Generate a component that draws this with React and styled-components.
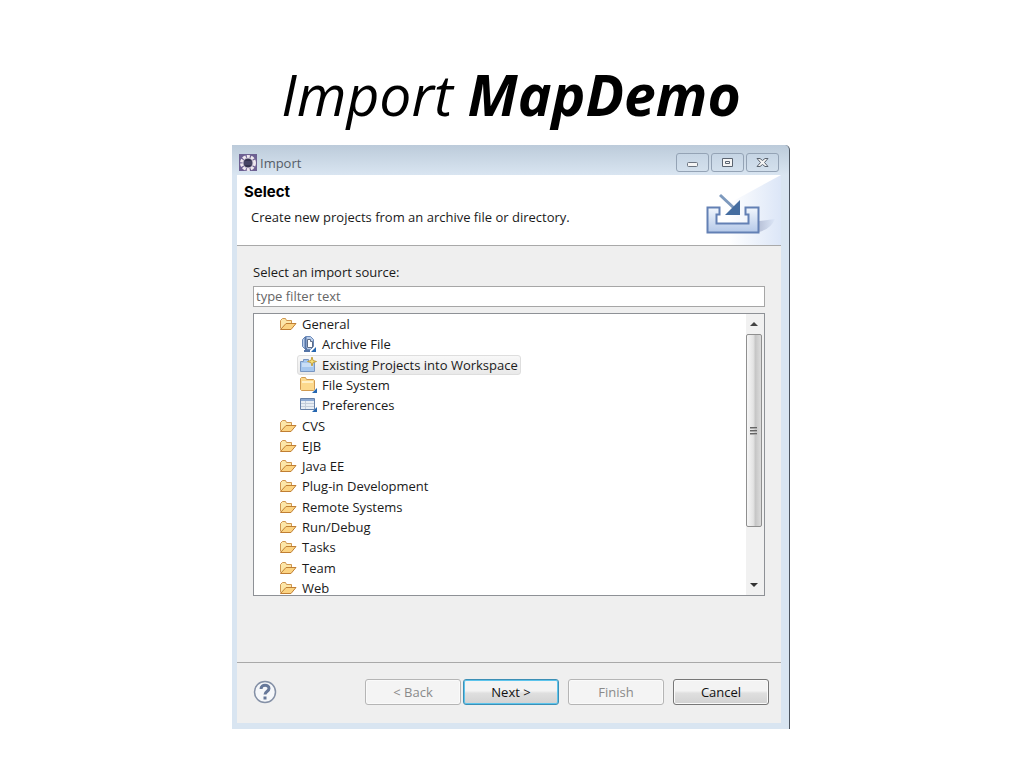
import React, { useState } from 'react';
import styled, { createGlobalStyle } from 'styled-components';

const GlobalStyle = createGlobalStyle`
  * {
    box-sizing: border-box;
  }
  body {
    margin: 0;
    background: #fff;
    color: #1a1a1a;
    font: 13px/20px "Open Sans", "Noto Sans", sans-serif;
  }
  button, input {
    font: inherit;
  }
`;

const Slide = styled.main`
  padding: 58px 234px 39px 232px;
`;

const SlideTitle = styled.h1`
  margin: 0 0 15px;
  font: italic 400 57px/72px "Open Sans", "Noto Sans", sans-serif;
  color: #000;
  text-align: center;
  white-space: nowrap;
`;

const Dialog = styled.section`
  padding: 0 8px 6px 5px;
  background: #d9e5f1;
  border-right: 1px solid #4c5560;
  border-top-right-radius: 5px;
  background-image: linear-gradient(#bccbda, #d9e5f1 30px);
`;

const TitleBar = styled.header`
  display: flex;
  align-items: center;
  height: 30px;
  padding: 5px 2px 0;
  gap: 3px;
  color: #555d68;
`;

const TitleText = styled.span`
  flex: 1;
`;

const WindowButtons = styled.div`
  display: flex;
  gap: 2px;
`;

const WindowButton = styled.button`
  display: grid;
  place-items: center;
  width: 33px;
  height: 19px;
  padding: 0;
  border: 1px solid #94a3b5;
  border-radius: 3px;
  background: linear-gradient(#c6d5e4, #d3e0ed);
`;

const Banner = styled.div`
  display: flex;
  justify-content: space-between;
  height: 71px;
  padding-left: 7px;
  border-bottom: 1px solid #a9a9a9;
  background: #fff;
`;

const BannerTitle = styled.h2`
  margin: 7px 0 5px;
  font: 700 15px/20px Inter, sans-serif;
  color: #000;
`;

const BannerText = styled.p`
  margin: 0;
  padding-left: 7px;
`;

const Body = styled.div`
  padding: 16px 16px 66px;
  background: #efefef;
  border-bottom: 1px solid #a9a9a9;
`;

const FilterLabel = styled.label`
  display: block;
  margin-bottom: 4px;
`;

const FilterInput = styled.input`
  display: block;
  width: 100%;
  height: 21px;
  margin-bottom: 6px;
  padding: 0 2px 1px;
  border: 1px solid #a6a6a6;
  background: #fff;
  &::placeholder {
    color: #666;
    opacity: 1;
  }
`;

const TreeFrame = styled.div`
  display: flex;
  height: 283px;
  border: 1px solid #8e9196;
  background: #fff;
  overflow: hidden;
`;

const Tree = styled.ul`
  flex: 1;
  display: grid;
  grid-auto-rows: 1fr;
  justify-items: start;
  height: 284px;
  margin: 0;
  padding: 0;
  line-height: 18px;
  list-style: none;
`;

const TreeItem = styled.li`
  display: flex;
  align-items: center;
  gap: 5px;
  margin-left: ${(props) => (props.$level === 2 ? '43px' : '23px')};
  padding: 0 2px;
  border: 1px solid ${(props) => (props.$selected ? '#dedede' : 'transparent')};
  border-radius: 3px;
  background: ${(props) =>
    props.$selected ? 'linear-gradient(#f8f8f8, #e9e9e9)' : 'none'};
`;

const ScrollBar = styled.div`
  display: flex;
  flex-direction: column;
  width: 18px;
  padding-right: 2px;
  background: #f1f1f1;
`;

const ScrollButton = styled.button`
  display: grid;
  place-items: center;
  height: 20px;
  padding: 0;
  border: 0;
  background: none;
`;

const ScrollTrack = styled.div`
  flex: 1;
`;

const ScrollThumb = styled.div`
  display: grid;
  place-items: center;
  height: 80%;
  border: 1px solid #8f8f8f;
  border-radius: 2px;
  background: linear-gradient(90deg, #f6f6f6, #e3e3e3 45%, #c6c6c6 60%, #dcdcdc);
`;

const Footer = styled.footer`
  display: flex;
  align-items: center;
  height: 60px;
  padding: 0 12px 2px 16px;
  background: #efefef;
`;

const HelpButton = styled.button`
  display: grid;
  padding: 0;
  margin-right: auto;
  border: 0;
  background: none;
`;

const ButtonGroup = styled.div`
  display: flex;
  gap: ${(props) => (props.$tight ? '2px' : '9px')};
`;

const ActionButton = styled.button`
  width: 96px;
  height: 26px;
  padding: 0;
  border: 1px solid #777;
  border-radius: 3px;
  background: linear-gradient(#f3f3f3 45%, #dfdfdf 55%, #d2d2d2);
  box-shadow: inset 0 0 0 1px #fafafa;
  color: #111;
  line-height: 22px;
  &:disabled {
    border-color: #b5b5b5;
    background: #f4f4f4;
    color: #8a8a8a;
  }
  ${(props) =>
    props.$primary &&
    `
    border-color: #3c8fb5;
    box-shadow: inset 0 0 0 1px #5cc4ec;
  `}
`;

function EclipseIcon() {
  return (
    <svg width="18" height="18" viewBox="0 0 18 18" aria-hidden="true">
      <rect x="0" y="0" width="18" height="17" fill="#6d6092" />
      <circle cx="9" cy="9" r="6.500" fill="none" stroke="#f0e9ef" strokeWidth="3" strokeDasharray="3 1.100" />
      <circle cx="9" cy="9" r="5" fill="#35334f" stroke="#d8d2e0" />
      <path d="M5 8h8M5 10h8" stroke="#5d5b7d" />
    </svg>
  );
}

function ImportIcon() {
  return (
    <svg width="76" height="70" viewBox="0 0 76 70" aria-hidden="true">
      <defs>
        <linearGradient id="glow" x1="0" y1="0" x2="1" y2="0">
          <stop offset="0.2" stopColor="#fff" />
          <stop offset="1" stopColor="#dce6f7" />
        </linearGradient>
        <linearGradient id="tray" x1="0" y1="0" x2="0" y2="1">
          <stop offset="0" stopColor="#f2f7fd" />
          <stop offset="1" stopColor="#b4c8e8" />
        </linearGradient>
        <linearGradient id="shade" x1="0" y1="0" x2="1" y2="0">
          <stop offset="0" stopColor="#b9c2d8" />
          <stop offset="1" stopColor="#dce6f7" />
        </linearGradient>
      </defs>
      <path d="M76 0v70H10V36Z" fill="url(#glow)" />
      <path d="M54 57q12-3 16-13l-16 2z" fill="url(#shade)" />
      <path d="M2.500 32.500h12v7h-3v9h32v-9h-3v-7h13v25h-51z" fill="url(#tray)" stroke="#6380b4" strokeWidth="2" />
      <path d="M15 20L30 34" stroke="#7d99bd" strokeWidth="3" />
      <path d="M35 25v15H20z" fill="#456da0" />
    </svg>
  );
}

function FolderOpenIcon() {
  return (
    <svg width="17" height="16" viewBox="0 0 17 16" aria-hidden="true">
      <path d="M.5 12.500v-8l2-2h3l1 2h5v3" fill="#fce6a8" stroke="#cf9650" />
      <path d="M.5 13.500L6 7.500h10l-5 6z" fill="#fbd382" stroke="#c07f34" />
    </svg>
  );
}

function ArchiveIcon() {
  return (
    <svg width="17" height="18" viewBox="0 0 17 18" aria-hidden="true">
      <path d="M2.500 4.500l3-3h5l3 3v7l-3 3h-5l-3-3z" fill="#b9cdea" stroke="#6a89b8" />
      <path d="M7.500 4.500h3v2h2v6h-5z" fill="#fff" stroke="#5d6c87" />
      <path d="M5.500 2v11M4 16h6M6 13v3" stroke="#5574a6" strokeWidth="2" />
      <path d="M16 12v5h-5z" fill="#2566b0" />
    </svg>
  );
}

function ProjectIcon() {
  return (
    <svg width="17" height="16" viewBox="0 0 17 16" aria-hidden="true">
      <path d="M.5 4.500h3v-2h5v2h6v10H.5z" fill="#a6c7ee" stroke="#7896c2" />
      <path d="M2 6h11v4H2z" fill="#c9def6" />
      <path d="M12 0l1 3.500 3.500 1-3.500 1-1 3.500-1-3.500-3.500-1 3.500-1z" fill="#f9e27a" stroke="#c4a03c" />
    </svg>
  );
}

function FileSystemIcon() {
  return (
    <svg width="17" height="18" viewBox="0 0 17 18" aria-hidden="true">
      <path d="M.5 13.500v-11l1-1h4l1 2h7l1 1v9l-1 1h-12z" fill="#fcd98d" stroke="#d09a50" />
      <path d="M2 6h11" stroke="#fff0c6" strokeWidth="2" />
      <path d="M17 12v5h-5z" fill="#2566b0" />
    </svg>
  );
}

function PreferencesIcon() {
  return (
    <svg width="17" height="16" viewBox="0 0 17 16" aria-hidden="true">
      <path d="M.5 1.500h14v11H.5z" fill="#e7edf4" stroke="#6781a8" />
      <path d="M1 3h13" stroke="#8ba8d2" strokeWidth="2" />
      <path d="M1 6.500h13M1 9.500h13M5.500 4v8" stroke="#c3cdda" />
      <path d="M17 10v5h-5z" fill="#2566b0" />
    </svg>
  );
}

function HelpIcon() {
  return (
    <svg width="24" height="24" viewBox="0 0 24 24" aria-hidden="true">
      <circle cx="12" cy="12" r="10.500" fill="#f5f7fa" stroke="#8490a6" strokeWidth="1.500" />
      <path d="M8 9c0-5 8-5 8-.5 0 3-4 3-4 6M12 16.500v3" fill="none" stroke="#66789a" strokeWidth="3" />
    </svg>
  );
}

const sources = [
  { name: 'General', level: 1, icon: FolderOpenIcon },
  { name: 'Archive File', level: 2, icon: ArchiveIcon },
  { name: 'Existing Projects into Workspace', level: 2, icon: ProjectIcon },
  { name: 'File System', level: 2, icon: FileSystemIcon },
  { name: 'Preferences', level: 2, icon: PreferencesIcon },
  { name: 'CVS', level: 1, icon: FolderOpenIcon },
  { name: 'EJB', level: 1, icon: FolderOpenIcon },
  { name: 'Java EE', level: 1, icon: FolderOpenIcon },
  { name: 'Plug-in Development', level: 1, icon: FolderOpenIcon },
  { name: 'Remote Systems', level: 1, icon: FolderOpenIcon },
  { name: 'Run/Debug', level: 1, icon: FolderOpenIcon },
  { name: 'Tasks', level: 1, icon: FolderOpenIcon },
  { name: 'Team', level: 1, icon: FolderOpenIcon },
  { name: 'Web', level: 1, icon: FolderOpenIcon },
];

export default function App() {
  const [selected, setSelected] = useState('Existing Projects into Workspace');
  const [filter, setFilter] = useState('');

  return (
    <Slide>
      <GlobalStyle />
      <SlideTitle>
        Import <b>MapDemo</b>
      </SlideTitle>
      <Dialog>
        <TitleBar>
          <EclipseIcon />
          <TitleText>Import</TitleText>
          <WindowButtons>
            <WindowButton aria-label="Minimize">
              <svg width="13" height="11" viewBox="0 0 13 11">
                <rect x="1.500" y="5.500" width="10" height="4" rx="1" fill="#f5f5f5" stroke="#6b7480" />
              </svg>
            </WindowButton>
            <WindowButton aria-label="Maximize">
              <svg width="13" height="11" viewBox="0 0 13 11">
                <path d="M1.500 1.500h10v8h-10zM4.500 4.500h4v2h-4z" fill="#f5f5f5" stroke="#5b6470" />
              </svg>
            </WindowButton>
            <WindowButton aria-label="Close">
              <svg width="13" height="11" viewBox="0 0 13 11">
                <path d="M1 1.500h3l2.500 2 2.500-2h3L8.500 5.500l3.500 4H9l-2.500-2-2.500 2H1l3.500-4z" fill="#f5f5f5" stroke="#5b6470" />
              </svg>
            </WindowButton>
          </WindowButtons>
        </TitleBar>
        <Banner>
          <div>
            <BannerTitle>Select</BannerTitle>
            <BannerText>Create new projects from an archive file or directory.</BannerText>
          </div>
          <ImportIcon />
        </Banner>
        <Body>
          <FilterLabel htmlFor="filter">Select an import source:</FilterLabel>
          <FilterInput
            id="filter"
            type="text"
            placeholder="type filter text"
            value={filter}
            onChange={(event) => setFilter(event.target.value)}
          />
          <TreeFrame>
            <Tree role="tree">
              {sources.map(({ name, level, icon: Icon }) => (
                <TreeItem
                  key={name}
                  role="treeitem"
                  aria-level={level}
                  aria-selected={name === selected}
                  $level={level}
                  $selected={name === selected}
                  onClick={() => setSelected(name)}
                >
                  <Icon />
                  {name}
                </TreeItem>
              ))}
            </Tree>
            <ScrollBar>
              <ScrollButton aria-label="Scroll up">
                <svg width="8" height="4" viewBox="0 0 8 4">
                  <path d="M0 4l4-4 4 4z" fill="#444" />
                </svg>
              </ScrollButton>
              <ScrollTrack>
                <ScrollThumb>
                  <svg width="8" height="9" viewBox="0 0 8 9">
                    <path d="M0 1.500h7M0 4.500h7M0 7.500h7" stroke="#666" />
                    <path d="M0 2.500h7M0 5.500h7M0 8.500h7" stroke="#aaa" />
                  </svg>
                </ScrollThumb>
              </ScrollTrack>
              <ScrollButton aria-label="Scroll down">
                <svg width="8" height="4" viewBox="0 0 8 4">
                  <path d="M0 0l4 4 4-4z" fill="#333" />
                </svg>
              </ScrollButton>
            </ScrollBar>
          </TreeFrame>
        </Body>
        <Footer>
          <HelpButton aria-label="Help">
            <HelpIcon />
          </HelpButton>
          <ButtonGroup>
            <ButtonGroup $tight>
              <ActionButton disabled>&lt; Back</ActionButton>
              <ActionButton $primary>Next &gt;</ActionButton>
            </ButtonGroup>
            <ActionButton disabled>Finish</ActionButton>
            <ActionButton>Cancel</ActionButton>
          </ButtonGroup>
        </Footer>
      </Dialog>
    </Slide>
  );
}
